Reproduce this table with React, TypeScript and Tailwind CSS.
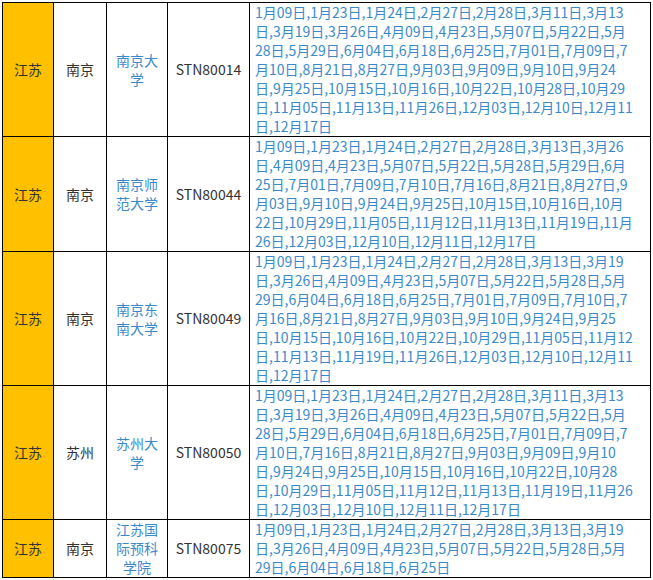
import React from "react";

type Row = { prov: string; city: string; uni: string[]; code: string; dates: string[] };

const rows: Row[] = [
  {
    prov: "江苏",
    city: "南京",
    uni: ["南京大", "学"],
    code: "STN80014",
    dates: [
      "1月09日,1月23日,1月24日,2月27日,2月28日,3月11日,3月13",
      "日,3月19日,3月26日,4月09日,4月23日,5月07日,5月22日,5月",
      "28日,5月29日,6月04日,6月18日,6月25日,7月01日,7月09日,7",
      "月10日,8月21日,8月27日,9月03日,9月09日,9月10日,9月24",
      "日,9月25日,10月15日,10月16日,10月22日,10月28日,10月29",
      "日,11月05日,11月13日,11月26日,12月03日,12月10日,12月11",
      "日,12月17日",
    ],
  },
  {
    prov: "江苏",
    city: "南京",
    uni: ["南京师", "范大学"],
    code: "STN80044",
    dates: [
      "1月09日,1月23日,1月24日,2月27日,2月28日,3月13日,3月26",
      "日,4月09日,4月23日,5月07日,5月22日,5月28日,5月29日,6月",
      "25日,7月01日,7月09日,7月10日,7月16日,8月21日,8月27日,9",
      "月03日,9月10日,9月24日,9月25日,10月15日,10月16日,10月",
      "22日,10月29日,11月05日,11月12日,11月13日,11月19日,11月",
      "26日,12月03日,12月10日,12月11日,12月17日",
    ],
  },
  {
    prov: "江苏",
    city: "南京",
    uni: ["南京东", "南大学"],
    code: "STN80049",
    dates: [
      "1月09日,1月23日,1月24日,2月27日,2月28日,3月13日,3月19",
      "日,3月26日,4月09日,4月23日,5月07日,5月22日,5月28日,5月",
      "29日,6月04日,6月18日,6月25日,7月01日,7月09日,7月10日,7",
      "月16日,8月21日,8月27日,9月03日,9月10日,9月24日,9月25",
      "日,10月15日,10月16日,10月22日,10月29日,11月05日,11月12",
      "日,11月13日,11月19日,11月26日,12月03日,12月10日,12月11",
      "日,12月17日",
    ],
  },
  {
    prov: "江苏",
    city: "苏州",
    uni: ["苏州大", "学"],
    code: "STN80050",
    dates: [
      "1月09日,1月23日,1月24日,2月27日,2月28日,3月11日,3月13",
      "日,3月19日,3月26日,4月09日,4月23日,5月07日,5月22日,5月",
      "28日,5月29日,6月04日,6月18日,6月25日,7月01日,7月09日,7",
      "月10日,7月16日,8月21日,8月27日,9月03日,9月09日,9月10",
      "日,9月24日,9月25日,10月15日,10月16日,10月22日,10月28",
      "日,10月29日,11月05日,11月12日,11月13日,11月19日,11月26",
      "日,12月03日,12月10日,12月11日,12月17日",
    ],
  },
  {
    prov: "江苏",
    city: "南京",
    uni: ["江苏国", "际预科", "学院"],
    code: "STN80075",
    dates: [
      "1月09日,1月23日,1月24日,2月27日,2月28日,3月13日,3月19",
      "日,3月26日,4月09日,4月23日,5月07日,5月22日,5月28日,5月",
      "29日,6月04日,6月18日,6月25日",
    ],
  },
];

export default function App() {
  return (
    <div className="bg-white w-[653px] h-[580px] overflow-hidden pt-[2px] pl-[2px]">
      <table
        className="border-collapse table-fixed w-[648px] text-[14px] leading-[19px] text-[#333333]"
        style={{ fontFamily: '"Noto Sans CJK SC", "Noto Sans", sans-serif' }}
      >
        <colgroup>
          <col className="w-[51px]" />
          <col className="w-[53px]" />
          <col className="w-[61px]" />
          <col className="w-[82px]" />
          <col className="w-[401px]" />
        </colgroup>
        <tbody>
          {rows.map((r, i) => (
            <tr key={i}>
              <td className="border border-black bg-[#FFC000] text-center align-middle p-0 text-[#333333]">
                {r.prov}
              </td>
              <td className="border border-black text-center align-middle p-0">{r.city}</td>
              <td className="border border-black text-center align-middle p-0 text-[#3a8acb]">
                {r.uni.map((u, j) => (
                  <div key={j}>{u}</div>
                ))}
              </td>
              <td className="border border-black text-center align-middle p-0">{r.code}</td>
              <td className="border border-black align-middle p-0 pl-[5px] text-[#3a8acb]">
                {r.dates.map((d, j) => (
                  <div key={j} className="whitespace-nowrap">
                    {d}
                  </div>
                ))}
              </td>
            </tr>
          ))}
        </tbody>
      </table>
    </div>
  );
}
